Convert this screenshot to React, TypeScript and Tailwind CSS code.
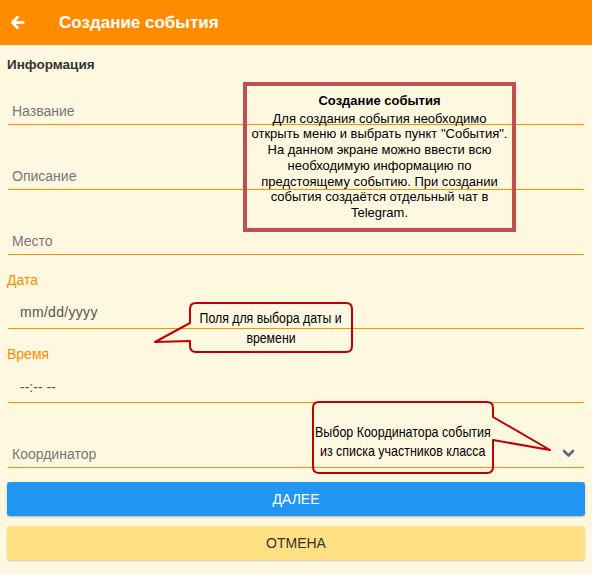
import React from "react"

const line = "border-b border-[#ff9100]"

function Field({ text, top, className = "" }: { text: string; top: string; className?: string }) {
    return (
        <div className={`${top} ${line} h-[28px] flex items-end ${className}`}>
            <span className="leading-[16px]">{text}</span>
        </div>
    )
}

export default function App() {
    return (
        <div className="relative w-[592px] h-[574px] bg-[#fff8e1] overflow-hidden font-['Liberation_Sans',Arial,sans-serif]">
            <header className="h-[45px] bg-[#ff8c00] flex items-center text-white">
                <svg className="ml-[10px] w-[15px] h-[15px]" viewBox="0 0 16 16" fill="none" stroke="white" strokeWidth="3" strokeLinecap="round" strokeLinejoin="round">
                    <path d="M14 8H3M8 2.5L2.5 8 8 13.5" />
                </svg>
                <h1 className="ml-[34px] text-[17px] font-bold">Создание события</h1>
            </header>

            <div className="px-[7px]">
                <div className="mt-[11px] h-[18px] flex items-center text-[13.5px] font-bold text-[#333]">Информация</div>

                <div className="px-[1px] text-[14px] text-[#777]">
                    <Field text="Название" top="mt-[23px]" className="pl-[4px] pb-[5px]" />
                    <Field text="Описание" top="mt-[37px]" className="pl-[4px] pb-[5px]" />
                    <Field text="Место" top="mt-[37px]" className="pl-[4px] pb-[5px]" />
                </div>

                <div className="mt-[17px] h-[16px] flex items-center text-[14px] text-[#ff8c00]">Дата</div>
                <div className="px-[1px] text-[14px] text-[#555]">
                    <Field text="mm/dd/yyyy" top="mt-[13px]" className="pl-[12px] pb-[8px] tracking-[0.3px]" />
                </div>

                <div className="mt-[17px] h-[16px] flex items-center text-[14px] text-[#ff8c00]">Время</div>
                <div className="px-[1px] text-[14px] text-[#555]">
                    <Field text="--:-- --" top="mt-[13px]" className="pl-[12px] pb-[7px]" />
                </div>

                <div className="px-[1px] text-[14px] text-[#777]">
                    <div className={`mt-[37px] ${line} h-[28px] flex items-end justify-between pb-[5px] pl-[4px] pr-[9px]`}>
                        <span className="leading-[16px]">Координатор</span>
                        <svg className="mb-[4px] w-[13px] h-[9px]" viewBox="0 0 13 9" fill="none" stroke="#546e7a" strokeWidth="2.6" strokeLinecap="round" strokeLinejoin="round">
                            <path d="M2 2l4.5 4.5L11 2" />
                        </svg>
                    </div>
                </div>

                <button className="mt-[14px] w-full h-[34px] rounded-[3px] bg-[#2196f3] text-white text-[14px] shadow-[0_1px_2px_rgba(0,0,0,0.25)]">
                    ДАЛЕЕ
                </button>
                <button className="mt-[10px] w-full h-[34px] rounded-[3px] bg-[#ffe082] text-[#333] text-[14px] shadow-[0_1px_2px_rgba(0,0,0,0.2)]">
                    ОТМЕНА
                </button>
            </div>

            {/* annotations */}
            <div className="absolute left-[243px] top-[82px] w-[273px] h-[150px] border-[4px] border-[#c0504d] flex flex-col items-center pt-[7px] text-center text-black text-[13px] leading-[15.7px]">
                <div className="font-bold mb-[2px]">Создание события</div>
                <div className="px-[2px]">
                    Для создания события необходимо открыть меню и выбрать пункт "События". На данном экране можно ввести всю необходимую информацию по предстоящему событию. При создании события создаётся отдельный чат в Telegram.
                </div>
            </div>

            <svg className="absolute left-0 top-0 w-[592px] h-[574px] pointer-events-none" viewBox="0 0 592 574" fill="none" stroke="#c00000" strokeWidth="2" strokeLinejoin="round">
                <path d="M196 303H346Q352 303 352 309V346Q352 352 346 352H196Q190 352 190 346V341L155 342L190 323V309Q190 303 196 303Z" />
                <path d="M319 402H487Q493 402 493 408V417L550 450L493 440V467Q493 473 487 473H319Q313 473 313 467V408Q313 402 319 402Z" />
            </svg>

            <div className="absolute left-[190px] top-[308px] w-[162px] flex flex-col items-center text-black text-[15px] leading-[20px]">
                <span className="whitespace-nowrap scale-x-[0.82]">Поля для выбора даты и</span>
                <span className="whitespace-nowrap scale-x-[0.82]">времени</span>
            </div>
            <div className="absolute left-[313px] top-[422px] w-[180px] flex flex-col items-center text-black text-[15px] leading-[19px]">
                <span className="whitespace-nowrap scale-x-[0.83]">Выбор Координатора события</span>
                <span className="whitespace-nowrap scale-x-[0.83]">из списка участников класса</span>
            </div>
        </div>
    )
}
